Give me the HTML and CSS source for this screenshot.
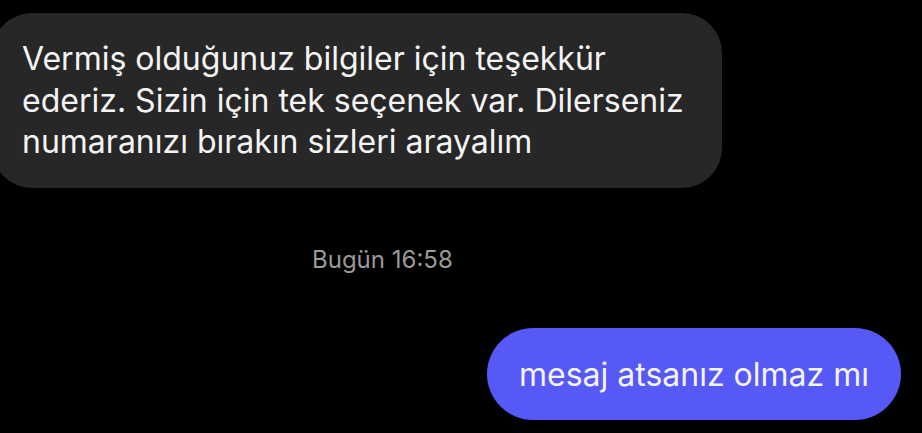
FILE: index.html
```html
<!DOCTYPE html>
<html lang="tr">
<head>
<meta charset="UTF-8">
<meta name="viewport" content="width=device-width, initial-scale=1.0">
<title>Mesajlar</title>
<link rel="stylesheet" href="styles.css">
</head>
<body>

<div class="chat">
    <div class="bubble incoming">
        Vermiş olduğunuz bilgiler için teşekkür<br>
        ederiz. Sizin için tek seçenek var. Dilerseniz<br>
        numaranızı bırakın sizleri arayalım
    </div>

    <div class="stamp">Bugün 16:58</div>

    <div class="bubble outgoing">mesaj atsanız olmaz mı</div>
</div>

</body>
</html>
```

FILE: styles.css
```css
body {
    margin: 0;
    background-color: #000;
    font-family: Inter, "Noto Sans", sans-serif;
    overflow: hidden;
}

.chat {
    display: flex;
    flex-direction: column;
    padding-top: 13px;
}

.bubble {
    color: #f4f4f4;
    font-size: 32px;
}

.incoming {
    align-self: flex-start;
    margin-left: -8px;
    width: 730px;
    height: 175px;
    box-sizing: border-box;
    padding: 25px 0 0 30px;
    line-height: 41.5px;
    background-color: #272727;
    border-radius: 40px;
}

.stamp {
    margin: 58px 0 0 312px;
    color: #9a9a9a;
    font-size: 24px;
    line-height: 28px;
}

.outgoing {
    align-self: flex-end;
    margin: 54px 21px 0 0;
    height: 92px;
    box-sizing: border-box;
    padding: 0 32px;
    display: flex;
    align-items: center;
    background-color: #5659f6;
    border-radius: 46px;
}
```
